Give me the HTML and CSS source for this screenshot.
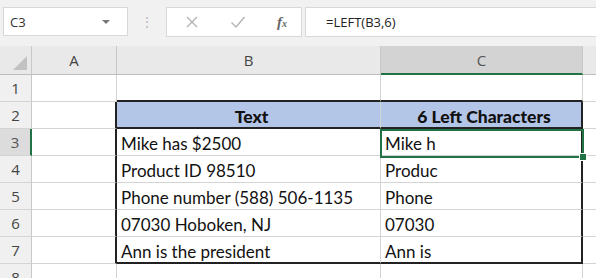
FILE: index.html
```html
<!DOCTYPE html>
<html lang="en">
<head>
  <meta charset="UTF-8" />
  <title>LEFT function</title>
  <link rel="stylesheet" href="styles.css">
</head>
<body>
  <div class="formula-bar">
    <div class="name-box">
      <span>C3</span>
      <span class="caret"></span>
    </div>
    <div class="grip">⋮</div>
    <div class="fx-buttons">
      <svg class="icon" width="14" height="14" viewBox="0 0 14 14"><path d="M2 2 L12 12 M12 2 L2 12" stroke="#b3b3b3" stroke-width="1.4" fill="none"/></svg>
      <svg class="icon" width="16" height="14" viewBox="0 0 16 14"><path d="M1.5 7.5 L6 12 L14.5 2" stroke="#b3b3b3" stroke-width="1.4" fill="none"/></svg>
      <span class="fx">f<sub>x</sub></span>
    </div>
    <div class="formula-input">=LEFT(B3,6)</div>
  </div>

  <div class="sheet">
    <div class="corner"><span class="tri"></span></div>
    <div class="col-head">A</div>
    <div class="col-head">B</div>
    <div class="col-head active">C</div>
    <div class="filler head"></div>

    <div class="row-head">1</div>
    <div class="cell"></div>
    <div class="cell edge-bottom"></div>
    <div class="cell edge-bottom"></div>
    <div class="filler"></div>

    <div class="row-head">2</div>
    <div class="cell edge-right"></div>
    <div class="cell title">Text</div>
    <div class="cell title last">6 Left Characters</div>
    <div class="filler"></div>

    <div class="row-head active">3</div>
    <div class="cell edge-right"></div>
    <div class="cell">Mike has $2500</div>
    <div class="cell last">Mike h</div>
    <div class="filler"></div>

    <div class="row-head">4</div>
    <div class="cell edge-right"></div>
    <div class="cell">Product ID 98510</div>
    <div class="cell last">Produc</div>
    <div class="filler"></div>

    <div class="row-head">5</div>
    <div class="cell edge-right"></div>
    <div class="cell">Phone number (588) 506-1135</div>
    <div class="cell last">Phone</div>
    <div class="filler"></div>

    <div class="row-head">6</div>
    <div class="cell edge-right"></div>
    <div class="cell">07030 Hoboken, NJ</div>
    <div class="cell last">07030</div>
    <div class="filler"></div>

    <div class="row-head">7</div>
    <div class="cell edge-right"></div>
    <div class="cell edge-bottom">Ann is the president</div>
    <div class="cell last edge-bottom">Ann is</div>
    <div class="filler"></div>

    <div class="row-head">8</div>
    <div class="cell"></div>
    <div class="cell"></div>
    <div class="cell"></div>
    <div class="filler"></div>

    <div class="selection"><span class="handle"></span></div>
  </div>
</body>
</html>
```

FILE: styles.css
```css
body {
  margin: 0;
  padding: 0;
  background-color: white;
  font-family: 'Open Sans', 'Noto Sans', sans-serif;
  overflow: hidden;
}

.formula-bar {
  background-color: #f1f1f1;
  height: 46px;
  padding: 7px 0 0 3px;
  box-sizing: border-box;
  display: flex;
  align-items: flex-start;
}

.name-box {
  width: 125px;
  height: 29px;
  box-sizing: border-box;
  background-color: white;
  border: 1px solid #d8d8d8;
  display: flex;
  align-items: center;
  justify-content: space-between;
  padding: 0 17px 0 6px;
  font-size: 13px;
  color: #333;
}

.caret {
  width: 0;
  height: 0;
  border-left: 4px solid transparent;
  border-right: 4px solid transparent;
  border-top: 4px solid #777;
}

.grip {
  width: 38px;
  height: 29px;
  line-height: 29px;
  text-align: center;
  color: #bdbdbd;
  font-size: 14px;
}

.fx-buttons {
  width: 136px;
  height: 30px;
  box-sizing: border-box;
  background-color: white;
  border: 1px solid #d8d8d8;
  display: flex;
  align-items: center;
  gap: 31px;
  padding-left: 18px;
}

.fx {
  font-family: 'Liberation Serif', serif;
  font-style: italic;
  font-size: 15px;
  color: #666;
  font-weight: bold;
}

.fx sub {
  font-size: 10px;
  vertical-align: 0;
}

.formula-input {
  flex-grow: 1;
  height: 30px;
  box-sizing: border-box;
  margin-left: 3px;
  background-color: white;
  border: 1px solid #d8d8d8;
  border-right: none;
  padding-left: 20px;
  line-height: 28px;
  font-size: 13px;
  color: #222;
}

.sheet {
  position: relative;
  display: grid;
  grid-template-columns: 32px 85px 264px 202px 1fr;
  grid-template-rows: 29px repeat(8, 27px);
  font-family: 'Lato', 'Open Sans', sans-serif;
  font-size: 17px;
  color: #111;
}

.sheet > div {
  box-sizing: border-box;
}

.corner {
  background-color: #e9e9e9;
  border-right: 1px solid #c8c8c8;
  border-bottom: 1px solid #bdbdbd;
  position: relative;
}

.tri {
  position: absolute;
  right: 4px;
  bottom: 4px;
  width: 0;
  height: 0;
  border-left: 14px solid transparent;
  border-bottom: 14px solid #c2c2c2;
}

.col-head {
  background-color: #e9e9e9;
  border-right: 1px solid #c8c8c8;
  border-bottom: 1px solid #bdbdbd;
  text-align: center;
  line-height: 28px;
  font-family: 'Open Sans', sans-serif;
  font-size: 15px;
  color: #444;
}

.col-head.active {
  background-color: #d3d3d3;
  border-bottom: 2px solid #217346;
  color: #555;
}

.filler.head {
  background-color: #e9e9e9;
  border-bottom: 1px solid #bdbdbd;
}

.row-head {
  background-color: #f0f0f0;
  border-right: 1px solid #c8c8c8;
  border-bottom: 1px solid #d4d4d4;
  text-align: center;
  line-height: 27px;
  font-family: 'Open Sans', sans-serif;
  font-size: 15px;
  color: #444;
}

.row-head.active {
  background-color: #dcdcdc;
  border-right: 2px solid #217346;
  color: #555;
}

.cell {
  border-right: 1px solid #d4d4d4;
  border-bottom: 1px solid #d4d4d4;
  padding: 4px 0 0 4px;
  line-height: 22px;
  white-space: nowrap;
}

.filler {
  border-bottom: 1px solid #d4d4d4;
}

.cell.edge-right {
  border-right: 2px solid #222;
}

.cell.edge-bottom {
  border-bottom: 2px solid #222;
}

.cell.last {
  border-right: 2px solid #222;
}

.cell.title {
  background-color: #b4c6e7;
  border-bottom: 2px solid #222;
  font-weight: 900;
  font-size: 17.5px;
  text-align: center;
  line-height: 22px;
  padding: 4px 0 0 6px;
}

.selection {
  position: absolute;
  left: 380px;
  top: 83px;
  width: 204px;
  height: 29px;
  border: 2px solid #217346;
  box-sizing: border-box;
  pointer-events: none;
}

.handle {
  position: absolute;
  right: -5px;
  bottom: -5px;
  width: 6px;
  height: 6px;
  background-color: #217346;
  border: 1px solid white;
}
```
